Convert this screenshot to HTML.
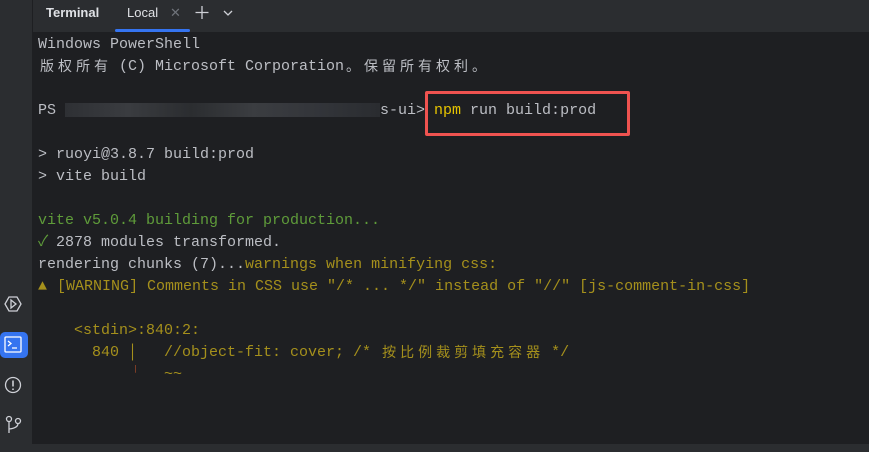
<!DOCTYPE html>
<html><head><meta charset="utf-8"><style>
*{margin:0;padding:0;box-sizing:border-box}
body{width:869px;height:452px;background:#1e1f22;position:relative;overflow:hidden;font-family:"Liberation Sans",sans-serif}
#side{position:absolute;left:0;top:0;width:33px;height:452px;background:#2b2d30;border-right:1px solid #1e1f22}
#tabs{position:absolute;left:33px;top:0;right:0;height:32px;background:#2b2d30}
.tab{position:absolute;top:5px;font-size:13px;color:#dfe1e5}
#term{position:absolute;left:38px;top:34px;font-family:"Liberation Mono","Noto Sans CJK SC",monospace;font-size:15px;line-height:22px;color:#bcbec4;white-space:pre}
#term div{height:22px;overflow:visible}
.g{color:#5f9c3a}.y{color:#a5901c}.b{color:#e6c400}
.c{display:inline-block;width:18px;text-align:center;font-family:"Noto Sans CJK SC",sans-serif;font-size:14px;line-height:15px;vertical-align:-1px}
.n{display:inline-block;width:9px;text-align:center;line-height:15px}
#box{position:absolute;left:425px;top:91px;width:205px;height:45px;border:3px solid #ef5350;border-radius:2px}
#bot{position:absolute;left:0;top:444px;width:869px;height:8px;background:#2b2d30}
.blur{display:inline-block;height:14px;vertical-align:middle;background:linear-gradient(90deg,#2e3034,#3a3c40 20%,#2b2d30 40%,#3b3d41 60%,#33353a 80%,#2a2c30)}
</style></head><body>
<div id="side">
<svg width="33" height="452" style="position:absolute;left:0;top:0">
<path d="M9 297 L17 297 L21 304 L17 311 L9 311 L5 304 Z" fill="none" stroke="#ced0d6" stroke-width="1.3"/>
<path d="M11 300 L16 304 L11 308 Z" fill="none" stroke="#ced0d6" stroke-width="1.3"/>
<rect x="0" y="332" width="28" height="26" rx="5" fill="#3574f0"/>
<rect x="5" y="337" width="16" height="15" rx="1" fill="none" stroke="#fff" stroke-width="1.3"/>
<path d="M8 341 L11 343.5 L8 346 M12 348 L17 348" fill="none" stroke="#fff" stroke-width="1.3"/>
<circle cx="13" cy="385" r="7.5" fill="none" stroke="#ced0d6" stroke-width="1.3"/>
<path d="M13 380.5 V386.5 M13 388.5 V390" stroke="#ced0d6" stroke-width="1.6"/>
<circle cx="9" cy="419" r="2.5" fill="none" stroke="#ced0d6" stroke-width="1.3"/>
<circle cx="18" cy="421" r="2.5" fill="none" stroke="#ced0d6" stroke-width="1.3"/>
<path d="M9 421.5 V433 M18 423.5 Q18 428 9 429" fill="none" stroke="#ced0d6" stroke-width="1.3"/>
</svg>
</div>
<div id="tabs">
<span class="tab" style="left:13px;font-weight:bold">Terminal</span>
<span class="tab" style="left:94px">Local</span>
<span class="tab" style="left:137px;color:#6f737a">✕</span>
<svg style="position:absolute;left:161px;top:4px" width="50" height="18"><path d="M8 2 V15 M1.5 8.5 H14.5" stroke="#ced0d6" stroke-width="1.3"/><path d="M30 7 L34 11 L38 7" fill="none" stroke="#ced0d6" stroke-width="1.3"/></svg>
<div style="position:absolute;left:82px;top:29px;width:75px;height:3px;border-radius:2px;background:#3574f0"></div>
</div>
<div id="term"><div>Windows PowerShell</div><div><span class="c">版</span><span class="c">权</span><span class="c">所</span><span class="c">有</span> (C) Microsoft Corporation<span class="c">。</span><span class="c">保</span><span class="c">留</span><span class="c">所</span><span class="c">有</span><span class="c">权</span><span class="c">利</span><span class="c">。</span></div><div></div><div>PS <span class="blur" style="width:315px"></span>s-ui&gt; <span class="b">npm</span> run build:prod</div><div></div><div>&gt; ruoyi@3.8.7 build:prod</div><div>&gt; vite build</div><div></div><div class="g">vite v5.0.4 building for production...</div><div><span class="g n">✓</span> 2878 modules transformed.</div><div>rendering chunks (7)...<span class="y">warnings when minifying css:</span></div><div class="y"><span class="n" style="width:19px;text-align:left">▲</span>[WARNING] Comments in CSS use "/* ... */" instead of "//" [js-comment-in-css]</div><div></div><div class="y">    &lt;stdin&gt;:840:2:</div><div class="y">      840 <span class="n">│</span>   //object-fit: cover; /* <span class="c">按</span><span class="c">比</span><span class="c">例</span><span class="c">裁</span><span class="c">剪</span><span class="c">填</span><span class="c">充</span><span class="c">容</span><span class="c">器</span> */</div><div class="y">          <span class="n" style="color:#b5502a">╵</span>   ~~</div></div>
<div id="box"></div>
<div id="bot"></div>
</body></html>
